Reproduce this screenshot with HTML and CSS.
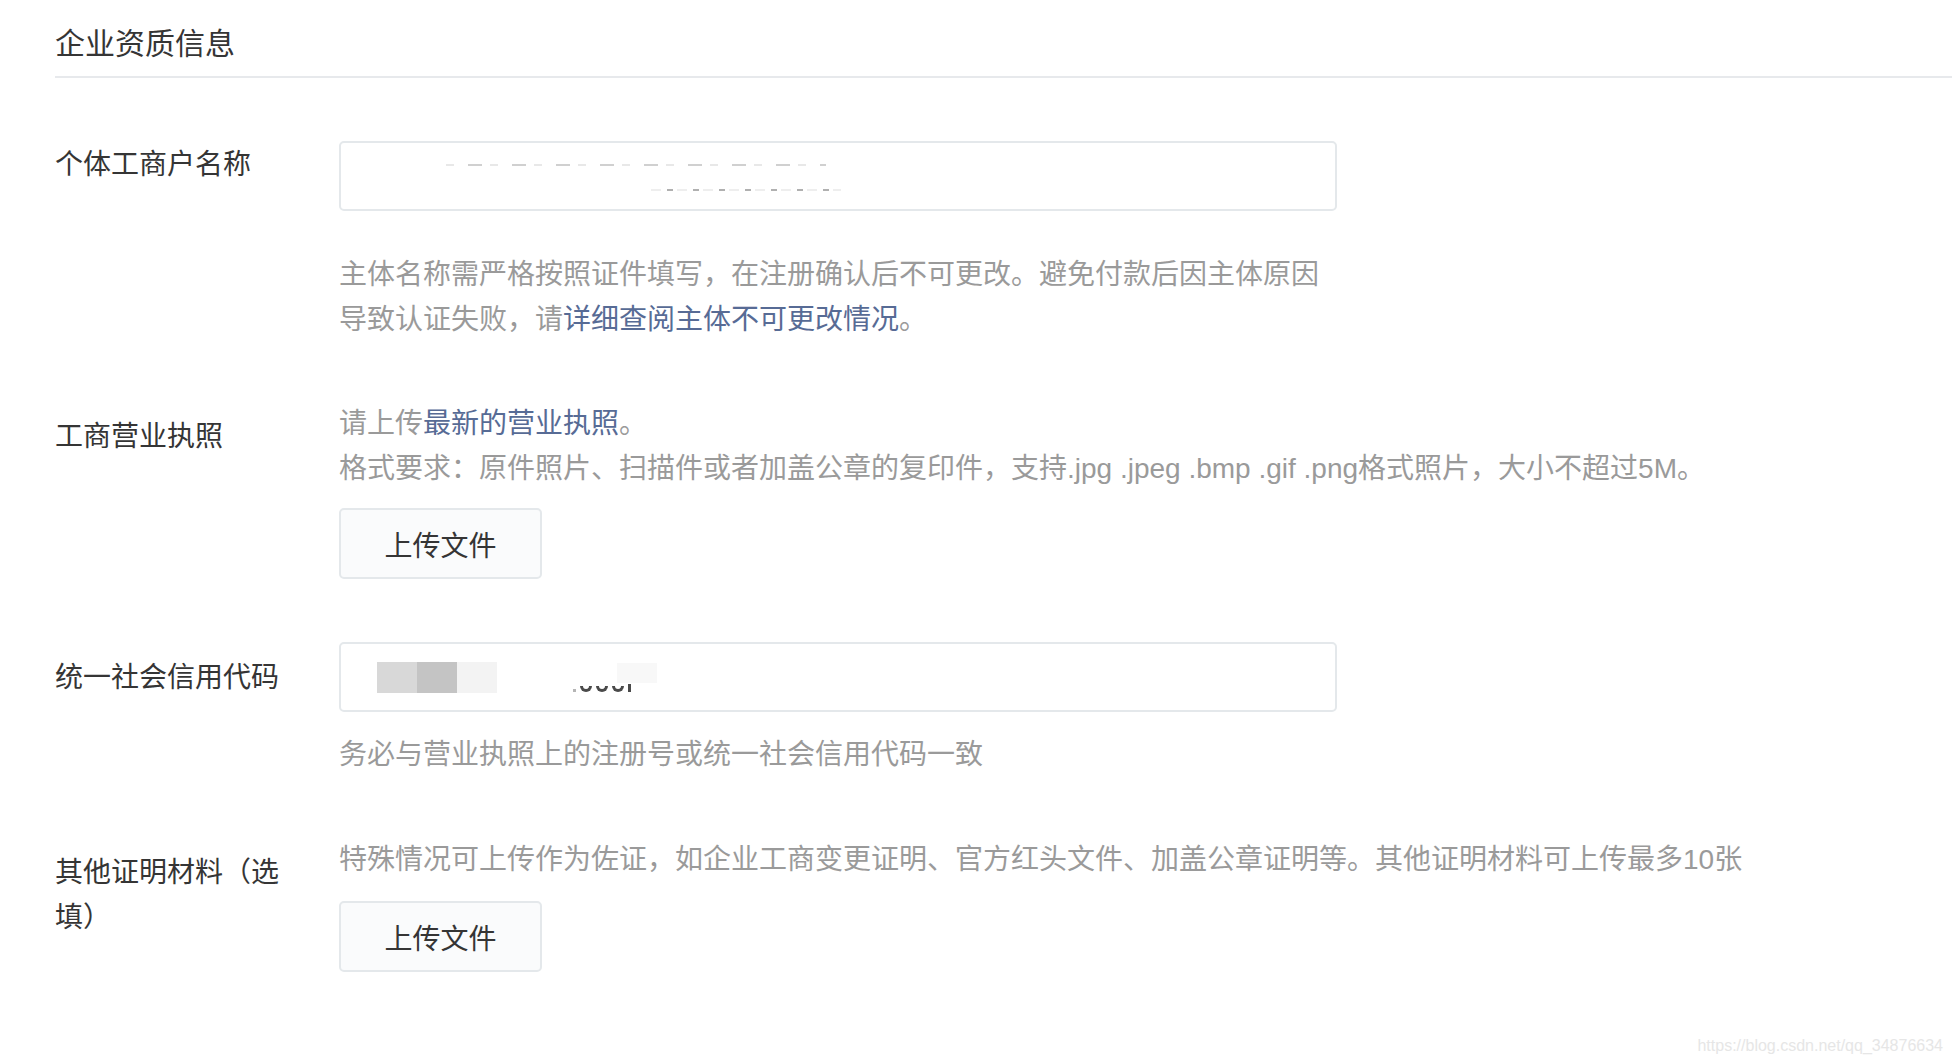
FILE: index.html
```html
<!doctype html>
<html>
<head>
    <meta http-equiv="content-type" content="text/html;charset=utf-8">
    <title>企业资质信息</title>
    <link rel="stylesheet" href="styles.css">
</head>
<body>
    <div class="page">
        <h2 class="section-title">企业资质信息</h2>

        <div class="form">
            <!-- 名称 -->
            <div class="form-row form-row--name">
                <div class="form-label form-label--top">个体工商户名称</div>
                <div class="form-control">
                    <div class="input">
                        <span class="blur blur--a"></span>
                        <span class="blur blur--b"></span>
                    </div>
                    <p class="tips tips--far">
                        主体名称需严格按照证件填写，在注册确认后不可更改。避免付款后因主体原因导致认证失败，请<a class="link" href="#">详细查阅主体不可更改情况</a>。
                    </p>
                </div>
            </div>

            <!-- 营业执照 -->
            <div class="form-row form-row--license">
                <div class="form-label">工商营业执照</div>
                <div class="form-control">
                    <p class="tips">请上传<a class="link" href="#">最新的营业执照</a>。</p>
                    <p class="tips">格式要求：原件照片、扫描件或者加盖公章的复印件，支持.jpg .jpeg .bmp .gif .png格式照片，大小不超过5M。</p>
                    <button class="btn btn--tight" type="button">上传文件</button>
                </div>
            </div>

            <!-- 信用代码 -->
            <div class="form-row">
                <div class="form-label">统一社会信用代码</div>
                <div class="form-control">
                    <div class="input">
                        <span class="mosaic"><i class="m1"></i><i class="m2"></i><i class="m3"></i></span>
                        <span class="code-marks"><i class="dot"></i><i class="cup"></i><i class="cup"></i><i class="cup"></i><i class="bar"></i></span>
                        <span class="mosaic-faint"></span>
                    </div>
                    <p class="tips tips--near">务必与营业执照上的注册号或统一社会信用代码一致</p>
                </div>
            </div>

            <!-- 其他材料 -->
            <div class="form-row">
                <div class="form-label">其他证明材料（选填）</div>
                <div class="form-control">
                    <p class="tips">特殊情况可上传作为佐证，如企业工商变更证明、官方红头文件、加盖公章证明等。其他证明材料可上传最多10张</p>
                    <button class="btn" type="button">上传文件</button>
                </div>
            </div>
        </div>
    </div>

    <div class="watermark">https://blog.csdn.net/qq_34876634</div>
</body>
</html>
```

FILE: styles.css
```css
html, body {
    margin: 0;
    background: #fff;
}

body {
    font-family: "Liberation Sans", "Noto Sans CJK SC", sans-serif;
    color: #353535;
}

.page {
    padding: 22px 0 0 55px;
}

.section-title {
    margin: 0;
    padding-bottom: 10px;
    font-size: 30px;
    font-weight: normal;
    line-height: 44px;
    border-bottom: 2px solid #e7e9ec;
}

.form {
    padding-top: 63px;
}

.form-row {
    display: grid;
    grid-template-columns: 284px 1fr;
    margin-bottom: 60px;
}

.form-row--name {
    margin-bottom: 59px;
}

.form-row--license {
    margin-bottom: 63px;
}

.form-label {
    max-width: 240px;
    padding-top: 13px;
    font-size: 28px;
    line-height: 45px;
}

.form-label--top {
    padding-top: 1px;
}

.form-control {
    min-width: 0;
}

.input {
    position: relative;
    box-sizing: border-box;
    width: 998px;
    height: 70px;
    border: 2px solid #e4e8eb;
    border-radius: 5px;
    background: #fff;
}

/* 打码的内容 */
.blur {
    position: absolute;
    height: 2px;
}

.blur--a {
    left: 105px;
    top: 21px;
    width: 380px;
    background: repeating-linear-gradient(90deg, #e8e8e8 0 8px, transparent 8px 22px, #d0d0d0 22px 36px, transparent 36px 44px);
}

.blur--b {
    left: 310px;
    top: 46px;
    width: 190px;
    background: repeating-linear-gradient(90deg, #eeeeee 0 10px, transparent 10px 16px, #b0b0b0 16px 22px, transparent 22px 26px);
}

.mosaic {
    position: absolute;
    left: 36px;
    top: 18px;
    display: flex;
    height: 31px;
}

.mosaic i {
    width: 40px;
}

.mosaic .m1 { background: #d8d8d8; }
.mosaic .m2 { background: #c4c4c4; }
.mosaic .m3 { background: #f3f3f3; }

.code-marks {
    position: absolute;
    left: 232px;
    top: 40px;
    display: flex;
    align-items: flex-end;
    gap: 4px;
    height: 8px;
}

.code-marks i {
    display: block;
}

.code-marks .dot {
    width: 3px;
    height: 3px;
    background: #b5b5b5;
}

.code-marks .cup {
    box-sizing: border-box;
    width: 12px;
    height: 6px;
    border: 3px solid #4a4a4a;
    border-top: 0;
    border-radius: 0 0 6px 6px;
}

.code-marks .bar {
    width: 3px;
    height: 8px;
    background: #4a4a4a;
}

.mosaic-faint {
    position: absolute;
    left: 276px;
    top: 19px;
    width: 40px;
    height: 20px;
    background: #f8f8f8;
}

.tips {
    margin: 0;
    max-width: 1000px;
    font-size: 28px;
    line-height: 45px;
    color: #9a9a9a;
    white-space: nowrap;
}

.tips--far {
    margin-top: 41px;
    white-space: normal;
}

.tips--near {
    margin-top: 20px;
}

.link {
    color: #576b95;
    text-decoration: none;
}

.btn {
    display: block;
    box-sizing: border-box;
    width: 203px;
    height: 71px;
    margin-top: 19px;
    padding: 0;
    border: 2px solid #e4e8eb;
    border-radius: 5px;
    background: #fafbfc;
    font-family: inherit;
    font-size: 28px;
    color: #353535;
    cursor: pointer;
}

.btn--tight {
    margin-top: 17px;
}

.watermark {
    position: absolute;
    right: 9px;
    bottom: 9px;
    font-size: 16px;
    color: #e6e6e6;
}
```
